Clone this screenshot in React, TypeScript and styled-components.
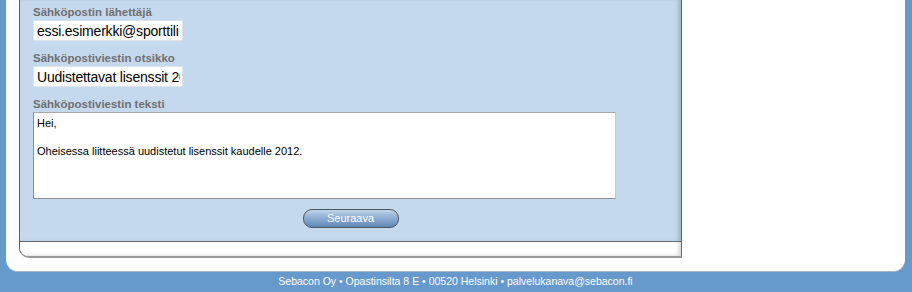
import React from "react";
import styled, { createGlobalStyle } from "styled-components";

const Global = createGlobalStyle`
  html, body { margin: 0; padding: 0; background: #6699cc; }
  body { font-family: "Liberation Sans", Arial, sans-serif; }
`;

const Page = styled.div`
  width: 912px;
  height: 292px;
  box-sizing: border-box;
  padding: 0 7px 0 6px;
  display: flex;
  flex-direction: column;
  overflow: hidden;
`;

const Sheet = styled.div`
  background: #ffffff;
  border-radius: 0 0 12px 12px;
  padding: 0 0 13px 13px;
  border-bottom: 1px solid #a9b4c0;
  display: flex;
`;

const Panel = styled.div`
  width: 661px;
  border-left: 1px solid #5a5a5a;
  border-right: 1px solid #666666;
  border-bottom: 2px solid #9a9a9a;
  border-bottom-left-radius: 10px;
  overflow: hidden;
  display: flex;
  flex-direction: column;
`;

const FormArea = styled.div`
  background: #c5d9ee;
  border-bottom: 1px solid #666666;
  box-shadow: inset -4px 0 4px -2px rgba(70, 90, 110, 0.35);
  height: 242px;
  box-sizing: border-box;
  padding: 5px 0 0 0;
  display: flex;
  flex-direction: column;
`;

const PanelFoot = styled.div`
  height: 14px;
  background: #ffffff;
  box-shadow: inset -4px -2px 4px -2px rgba(0, 0, 0, 0.18);
`;

const Field = styled.div<{ $gap?: number }>`
  display: flex;
  flex-direction: column;
  align-items: flex-start;
  margin: 0 0 ${(p) => p.$gap ?? 10}px 13px;
`;

const Label = styled.label`
  display: block;
  height: 14px;
  line-height: 14px;
  margin-bottom: 1px;
  font-family: "Liberation Sans", Arial, sans-serif;
  font-size: 11.5px;
  font-weight: bold;
  color: #707070;
  white-space: nowrap;
`;

const TextInput = styled.input`
  width: 150px;
  height: 21px;
  box-sizing: border-box;
  margin: 0;
  padding: 0 2px 0 3px;
  border: 1px solid #dde3ea;
  background: #ffffff;
  font-family: "Liberation Sans", Arial, sans-serif;
  font-size: 14px;
  letter-spacing: -0.2px;
  color: #000000;
  outline: none;
`;

const TextArea = styled.textarea`
  width: 583px;
  height: 87px;
  box-sizing: border-box;
  margin: 0;
  padding: 3px 3px;
  border: 1px solid #8c8c8c;
  border-top-color: #a8a8a8;
  border-right-color: #c8c8c8;
  background: #ffffff;
  font-family: "Liberation Sans", Arial, sans-serif;
  font-size: 11px;
  line-height: 14px;
  color: #000000;
  resize: none;
  outline: none;
  overflow: hidden;
`;

const ButtonRow = styled.div`
  display: flex;
  justify-content: center;
`;

const PillButton = styled.button`
  width: 96px;
  height: 19px;
  box-sizing: border-box;
  margin: 0;
  padding: 0;
  border: 1px solid #4f555c;
  border-radius: 9px;
  background: linear-gradient(
    to bottom,
    #c2d5ea 0%,
    #98b6d8 35%,
    #7ea2ca 65%,
    #5f86b5 100%
  );
  color: #ffffff;
  font-family: "Liberation Sans", Arial, sans-serif;
  font-size: 11px;
  line-height: 17px;
  text-align: center;
  cursor: pointer;
`;

const Footer = styled.div`
  height: 19px;
  line-height: 19px;
  text-align: center;
  color: #ffffff;
  font-family: "Liberation Sans", Arial, sans-serif;
  font-size: 10.5px;
  white-space: nowrap;
`;

export default function App() {
  return (
    <>
      <Global />
      <Page>
        <Sheet>
          <Panel>
            <FormArea>
              <Field>
                <Label>Sähköpostin lähettäjä</Label>
                <TextInput readOnly defaultValue="essi.esimerkki@sporttili.fi" />
              </Field>
              <Field>
                <Label>Sähköpostiviestin otsikko</Label>
                <TextInput readOnly defaultValue="Uudistettavat lisenssit 2012" />
              </Field>
              <Field $gap={10}>
                <Label>Sähköpostiviestin teksti</Label>
                <TextArea
                  readOnly
                  defaultValue={
                    "Hei,\n\nOheisessa liitteessä uudistetut lisenssit kaudelle 2012."
                  }
                />
              </Field>
              <ButtonRow>
                <PillButton type="button">Seuraava</PillButton>
              </ButtonRow>
            </FormArea>
            <PanelFoot />
          </Panel>
        </Sheet>
        <Footer>
          Sebacon Oy • Opastinsilta 8 E • 00520 Helsinki • palvelukanava@sebacon.fi
        </Footer>
      </Page>
    </>
  );
}
